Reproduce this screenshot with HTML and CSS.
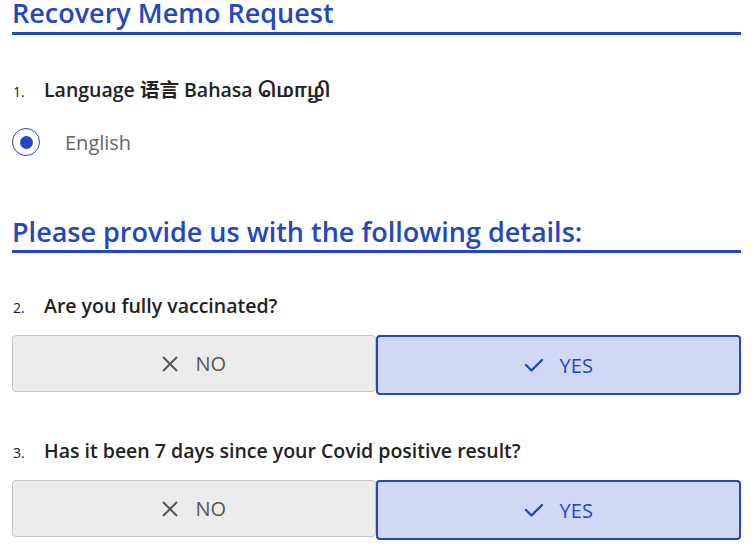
FILE: index.html
```html
<!DOCTYPE html>
<html>
<head>
<meta charset="utf-8">
<link rel="stylesheet" href="styles.css">
</head>
<body>
<div class="page">
  <h1 class="section-title main">Recovery Memo Request</h1>

  <div class="question q1">
    <div class="q-label"><span class="q-num">1.</span><span class="q-text">Language 语言 Bahasa மொழி</span></div>
    <div class="radio-row">
      <span class="radio"><span class="radio-dot"></span></span>
      <span class="radio-label">English</span>
    </div>
  </div>

  <h2 class="section-title sub">Please provide us with the following details:</h2>

  <div class="question q2">
    <div class="q-label"><span class="q-num">2.</span><span class="q-text">Are you fully vaccinated?</span></div>
    <div class="choices">
      <div class="choice no">
        <svg class="icon" width="18" height="18" viewBox="0 0 18 18"><path d="M2 2 L16 16 M16 2 L2 16" stroke="#555" stroke-width="2" fill="none"/></svg>
        <span>NO</span>
      </div>
      <div class="choice yes">
        <svg class="icon" width="20" height="16" viewBox="0 0 20 16"><path d="M2 8 L7.5 13.5 L18 3" stroke="#2447bf" stroke-width="2.4" fill="none" stroke-linecap="round" stroke-linejoin="round"/></svg>
        <span>YES</span>
      </div>
    </div>
  </div>

  <div class="question q3">
    <div class="q-label"><span class="q-num">3.</span><span class="q-text">Has it been 7 days since your Covid positive result?</span></div>
    <div class="choices">
      <div class="choice no">
        <svg class="icon" width="18" height="18" viewBox="0 0 18 18"><path d="M2 2 L16 16 M16 2 L2 16" stroke="#555" stroke-width="2" fill="none"/></svg>
        <span>NO</span>
      </div>
      <div class="choice yes">
        <svg class="icon" width="20" height="16" viewBox="0 0 20 16"><path d="M2 8 L7.5 13.5 L18 3" stroke="#2447bf" stroke-width="2.4" fill="none" stroke-linecap="round" stroke-linejoin="round"/></svg>
        <span>YES</span>
      </div>
    </div>
  </div>
</div>
</body>
</html>
```

FILE: styles.css
```css
* { box-sizing: border-box; }
html, body { margin: 0; padding: 0; background: #fff; }
body {
  font-family: "Open Sans", "Noto Sans", "Noto Sans CJK SC", "Noto Sans Tamil", sans-serif;
  color: #222;
}
.page {
  width: 729px;
  margin-left: 12px;
}
.section-title {
  margin: 0;
  font-size: 27px;
  font-weight: 600;
  color: #2447bf;
  line-height: 24px;
  border-bottom: 3px solid #2447bf;
}
.section-title.main {
  padding-top: 1px;
  padding-bottom: 7px;
}
.section-title.sub {
  margin-top: 64px;
  padding-bottom: 6px;
}
.q-label {
  display: flex;
  align-items: baseline;
  font-size: 19.5px;
  font-weight: 600;
  color: #222;
  line-height: 24px;
}
.q-num {
  width: 32px;
  padding-left: 1px;
  font-size: 14px;
  font-weight: 500;
}
.q1 { margin-top: 43px; }
.radio-row {
  display: flex;
  align-items: center;
  margin-top: 24px;
}
.radio {
  width: 28px;
  height: 28px;
  border: 1.5px solid #2447bf;
  border-radius: 50%;
  display: flex;
  align-items: center;
  justify-content: center;
  margin-right: 25px;
}
.radio-dot {
  width: 13px;
  height: 13px;
  border-radius: 50%;
  background: #2447bf;
}
.radio-label {
  font-size: 20px;
  color: #666;
}
.q2 { margin-top: 41px; }
.q3 { margin-top: 44px; }
.choices {
  display: flex;
  margin-top: 15px;
  align-items: flex-start;
}
.choice {
  flex: 1;
  display: flex;
  align-items: center;
  justify-content: center;
  gap: 16px;
  font-size: 20px;
  border-radius: 4px;
}
.choice.no {
  height: 57px;
  background: #ececec;
  border: 1px solid #c4c4c4;
  color: #555;
}
.choice.yes {
  height: 60px;
  background: #d0d8f3;
  border: 2px solid #2447bf;
  color: #2447bf;
}
.icon { display: block; }
```
